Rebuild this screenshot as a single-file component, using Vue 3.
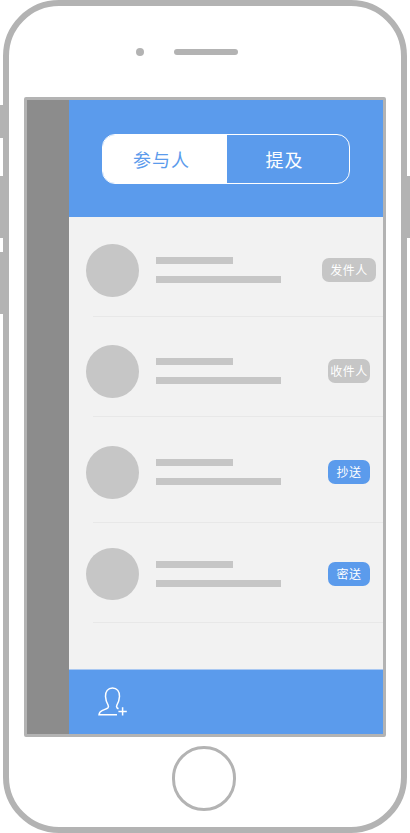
<script setup>
const people = [
  { role: '发件人', kind: 'gray wide', height: 100, top: 27 },
  { role: '收件人', kind: 'gray', height: 100, top: 28 },
  { role: '抄送', kind: 'blue', height: 106, top: 29 },
  { role: '密送', kind: 'blue', height: 100, top: 24.7 }
]
</script>

<template>
  <div class="page">
    <span class="side left one"></span>
    <span class="side left two"></span>
    <span class="side left three"></span>
    <span class="side right two"></span>
    <div class="phone">
      <div class="top">
        <span class="camera"></span>
        <span class="speaker"></span>
      </div>
      <div class="screen">
        <div class="rail"></div>
        <div class="main">
          <header class="head">
            <div class="tabs">
              <div class="tab active">参与人</div>
              <div class="tab">提及</div>
            </div>
          </header>
          <section class="list">
            <div
              v-for="p in people"
              :key="p.role"
              class="row"
              :style="{ height: p.height + 'px', paddingTop: p.top + 'px' }"
            >
              <div class="avatar"></div>
              <div class="lines">
                <span class="line short"></span>
                <span class="line long"></span>
              </div>
              <div class="badge-cell">
                <span class="badge" :class="p.kind">{{ p.role }}</span>
              </div>
            </div>
          </section>
          <footer class="foot">
            <svg class="add" width="30" height="30" viewBox="0 0 30 30" fill="none" stroke="#fff" stroke-width="1.5">
              <path d="M19 27.7H1c.2-2.2 1.500-3.400 3.500-4.300 2-.9 4.500-1.500 5.500-2.700.6-.8.5-2 0-2.900C8.800 15.800 7.700 13 7.500 9.500 7.200 4.500 10 1 14.500 1s7.300 3.500 7 8.500c-.2 3.500-1.300 6.300-2.500 8.300-.5.900-.6 2.100 0 2.900.3.4.8.7 1.500 1" />
              <path d="M24.600 20.200v8.400M20.400 24.400h8.400" />
            </svg>
          </footer>
        </div>
      </div>
      <div class="bottom">
        <span class="home"></span>
      </div>
    </div>
  </div>
</template>

<style>
html, body { margin: 0; background: #fff; }
</style>

<style scoped>
.page {
  position: relative;
  width: 410px;
  height: 833px;
  padding: 0 3px;
  box-sizing: border-box;
  overflow: hidden;
  background: #fff;
  font-family: "Noto Sans CJK SC", "Liberation Sans", sans-serif;
}
.side { position: absolute; width: 3px; background: #b3b3b3; }
.side.left { left: 0; }
.side.right { right: 0; }
.side.one { top: 105px; height: 33px; }
.side.two { top: 176px; height: 62px; }
.side.three { top: 252px; height: 62px; }
.phone {
  height: 833px;
  box-sizing: border-box;
  border: 6px solid #b3b3b3;
  border-radius: 56px;
  background: #fff;
  display: flex;
  flex-direction: column;
  padding: 0 15px;
}
.top {
  height: 91px;
  flex: none;
  display: flex;
  align-items: center;
  padding-left: 112.3px;
  gap: 29.4px;
}
.camera { width: 8px; height: 8px; border-radius: 50%; background: #b3b3b3; }
.speaker { width: 64.300px; height: 6px; border-radius: 3px; background: #b3b3b3; }
.screen {
  height: 640px;
  flex: none;
  box-sizing: border-box;
  border: 3px solid #b3b3b3;
  border-radius: 2px;
  display: flex;
}
.rail { width: 42px; flex: none; background: #8c8c8c; }
.main { flex: 1; display: flex; flex-direction: column; min-width: 0; }
.head {
  height: 117px;
  flex: none;
  background: #5b9bec;
  padding: 34px 0 0 33px;
  box-sizing: border-box;
}
.tabs {
  width: 248px;
  height: 50px;
  box-sizing: border-box;
  border: 1px solid #fff;
  border-radius: 13px;
  overflow: hidden;
  display: flex;
}
.tab {
  flex: 1;
  display: flex;
  align-items: center;
  justify-content: center;
  padding-right: 7px;
  font-size: 18px;
  letter-spacing: 1px;
  color: #fff;
}
.tab.active { flex: none; width: 124px; box-sizing: border-box; background: #fff; color: #5b9bec; }
.list {
  height: 453px;
  flex: none;
  background: #f2f2f2;
  box-sizing: border-box;
  border-bottom: 1px solid #a9c8f2;
}
.row {
  position: relative;
  box-sizing: border-box;
  display: flex;
  align-items: flex-start;
  padding-left: 17.2px;
}
.row::after {
  content: "";
  position: absolute;
  left: 24px;
  right: 0;
  bottom: 0;
  height: 1px;
  background: #e8e8e8;
}
.avatar { width: 52.6px; height: 52.6px; flex: none; border-radius: 50%; background: #c6c6c6; }
.lines {
  width: 125.4px;
  flex: none;
  margin: 13px 0 0 16.800px;
  display: flex;
  flex-direction: column;
  gap: 12px;
}
.line { display: block; height: 7px; background: #c6c6c6; }
.line.short { width: 77.5px; }
.line.long { width: 125.4px; }
.badge-cell {
  flex: 1;
  display: flex;
  justify-content: center;
  padding: 14.3px 0 0 34px;
  min-width: 0;
}
.badge {
  width: 42.3px;
  height: 24px;
  line-height: 24px;
  border-radius: 7px;
  text-align: center;
  font-size: 12px;
  letter-spacing: .5px;
  color: #fff;
  white-space: nowrap;
  flex: none;
}
.badge.wide { width: 54px; }
.badge.gray { background: #c6c6c6; }
.badge.blue { background: #5b9bec; }
.foot {
  flex: 1;
  background: #5b9bec;
  display: flex;
  align-items: center;
  padding-left: 29px;
}
.add { display: block; }
.bottom {
  flex: 1;
  display: flex;
  justify-content: center;
  align-items: flex-start;
  padding: 9px 2.500px 0 0;
}
.home {
  width: 64.500px;
  height: 64.500px;
  box-sizing: border-box;
  border: 3px solid #b3b3b3;
  border-radius: 50%;
}
</style>
